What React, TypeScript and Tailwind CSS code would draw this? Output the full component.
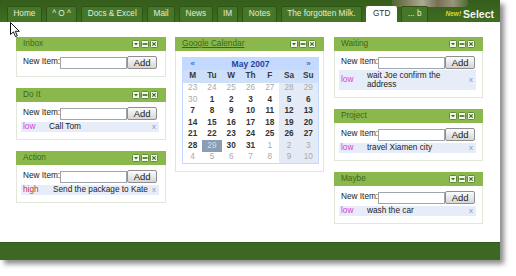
import React from "react";

function HeadIcons() {
  return (
    <div className="flex gap-[1px]">
      <svg width="8" height="8" viewBox="0 0 8 8">
        <rect x="0.5" y="0.5" width="7" height="7" rx="1" fill="#f4f7ef" stroke="#5f8a36" />
        <path d="M2 3h4L4 5.6z" fill="#3b6a1a" />
      </svg>
      <svg width="8" height="8" viewBox="0 0 8 8">
        <rect x="0.5" y="0.5" width="7" height="7" rx="1" fill="#f4f7ef" stroke="#5f8a36" />
        <rect x="1.6" y="3.2" width="4.8" height="1.6" fill="#3b6a1a" />
      </svg>
      <svg width="8" height="8" viewBox="0 0 8 8">
        <rect x="0.5" y="0.5" width="7" height="7" rx="1" fill="#f4f7ef" stroke="#5f8a36" />
        <path d="M2.3 2.3l3.4 3.4M5.7 2.3L2.3 5.7" stroke="#3b6a1a" strokeWidth="1.1" />
      </svg>
    </div>
  );
}

function Panel({
  title,
  link,
  children,
  body,
}: {
  title: string;
  link?: boolean;
  children: React.ReactNode;
  body?: string;
}) {
  return (
    <div>
      <div className="h-[14px] bg-[#8bb84d] flex items-center justify-between pl-[7px] pr-[8px]">
        <span
          className={
            link
              ? "text-[8.25px] leading-none text-[#3a6817] underline"
              : "text-[8.25px] leading-none text-[#3a6817]"
          }
        >
          {title}
        </span>
        <HeadIcons />
      </div>
      <div
        className={
          body ??
          "border-x border-b border-[#e2e7dc] bg-white pl-[4px] pr-[6px] pt-[5px] pb-[7px]"
        }
      >
        {children}
      </div>
    </div>
  );
}

function NewItemRow() {
  return (
    <div className="flex items-center h-[13px] pl-[2px]">
      <span className="text-[8.25px] leading-none text-[#222] whitespace-nowrap">New Item:</span>
      <input
        type="text"
        className="w-[67px] h-[12px] border border-[#9da6ae] bg-white outline-none"
      />
      <button className="w-[30px] h-[13px] border border-[#8f8f8f] rounded-[2px] bg-[linear-gradient(#fbfbfb,#d6d6d6)] text-[9.5px] leading-none text-[#222] flex items-center justify-center">
        Add
      </button>
    </div>
  );
}

function Item({ prio, text, tight }: { prio: "low" | "high"; text: string; tight?: boolean }) {
  return (
    <div
      className={
        tight
          ? "mt-[1px] flex items-center bg-[#e7edf8] pl-[2px] pr-[3px] py-[0.5px]"
          : "mt-[2px] flex items-center bg-[#e7edf8] pl-[2px] pr-[3px] h-[10px]"
      }
    >
      <span
        className={
          prio === "high"
            ? "w-[30px] shrink-0 text-[8.25px] leading-[9.5px] text-[#d03030]"
            : "w-[26px] shrink-0 text-[8.25px] leading-[9.5px] text-[#d33ed3]"
        }
      >
        {prio}
      </span>
      <span className="flex-1 text-[8.25px] leading-[9.5px] text-[#222] pr-[3px]">{text}</span>
      <span className="text-[8px] leading-none text-[#8797ba]">x</span>
    </div>
  );
}

const weeks: number[][] = [
  [23, 24, 25, 26, 27, 28, 29],
  [30, 1, 2, 3, 4, 5, 6],
  [7, 8, 9, 10, 11, 12, 13],
  [14, 15, 16, 17, 18, 19, 20],
  [21, 22, 23, 24, 25, 26, 27],
  [28, 29, 30, 31, 1, 2, 3],
  [4, 5, 6, 7, 8, 9, 10],
];

function isOther(w: number, d: number) {
  if (w === 0 || w === 6) return true;
  if (w === 1 && d === 0) return true;
  if (w === 5 && d >= 4) return true;
  return false;
}

function Calendar() {
  const names = ["M", "Tu", "W", "Th", "F", "Sa", "Su"];
  return (
    <div className="w-[137px] border border-[#c3d9ff] bg-[#c3d9ff]">
      <div className="grid grid-cols-7 h-[12px] items-center text-[#23449c]">
        <span className="text-center text-[8px] leading-none">«</span>
        <span className="col-span-5 text-center text-[8.5px] font-bold leading-none">May 2007</span>
        <span className="text-center text-[8px] leading-none">»</span>
      </div>
      <div className="grid grid-cols-7 h-[12.5px] items-center bg-[#cddff9]">
        {names.map((n) => (
          <span key={n} className="text-center text-[8.25px] font-bold leading-none text-[#3a3a3a]">
            {n}
          </span>
        ))}
      </div>
      <div className="grid grid-cols-7 bg-white">
        {weeks.map((wk, wi) =>
          wk.map((d, di) => {
            const other = isOther(wi, di);
            const sel = wi === 5 && di === 1;
            const weekend = di >= 5;
            let cls = "h-[11.5px] flex items-center justify-center text-[8.25px] leading-none ";
            if (sel) cls += "bg-[#8b9db4] text-[#d3dde9] ";
            else if (weekend) cls += "bg-[#e4ebf6] ";
            if (!sel) cls += other ? "text-[#aaaaaa]" : "font-bold text-[#333333]";
            return (
              <span key={wi + "-" + di} className={cls}>
                {d}
              </span>
            );
          })
        )}
      </div>
    </div>
  );
}

const tabs = ["Home", "^ O ^", "Docs & Excel", "Mail", "News", "IM", "Notes", "The forgotten Milk.", "GTD", "... b"];

export default function App() {
  return (
    <div className="w-[516px] h-[276px] bg-white [font-family:'Liberation_Sans',Arial,sans-serif]">
      <div className="relative w-[500px] h-[260px] flex flex-col bg-white shadow-[4px_4px_5px_rgba(0,0,0,0.45)]">
        {/* top bar */}
        <div className="relative h-[22px] bg-[linear-gradient(#355d1b,#3f6c22)] flex items-end pl-[7px] gap-[4px]">
          <div className="absolute left-[392px] top-0 w-[76px] h-[7px] rounded-b-[4px] bg-[linear-gradient(90deg,#4d6a33,#8d846a_20%,#b8b3a2_40%,#7d7058_60%,#a59c84_80%,#4f6c31)] opacity-90" />
          {tabs.map((t) =>
            t === "GTD" ? (
              <div
                key={t}
                className="relative h-[16px] px-[7px] bg-white rounded-t-[2px] flex items-center text-[8.25px] leading-none text-[#333]"
              >
                {t}
              </div>
            ) : (
              <div
                key={t}
                className="relative h-[16px] px-[5.4px] bg-[#467729] border border-b-0 border-[#2d5317] rounded-t-[2px] flex items-center text-[8.25px] leading-none text-[#e4ecda] whitespace-nowrap"
              >
                {t}
              </div>
            )
          )}
          <div className="relative ml-auto mr-[6px] h-[16px] flex items-center gap-[2px]">
            <span className="text-[6.5px] italic font-bold leading-none text-[#e8d41c]">New!</span>
            <span className="text-[10.5px] font-bold leading-none text-[#f2f6ec]">Select</span>
          </div>
        </div>

        {/* content */}
        <div className="flex-1 flex pl-[16px] pt-[15px]">
          <div className="w-[150px] flex flex-col gap-[11px]">
            <Panel title="Inbox">
              <NewItemRow />
            </Panel>
            <Panel title="Do It">
              <NewItemRow />
              <Item prio="low" text="Call Tom" />
            </Panel>
            <Panel title="Action">
              <NewItemRow />
              <Item prio="high" text="Send the package to Kate" />
            </Panel>
          </div>
          <div className="w-[149px] ml-[9px]">
            <Panel
              title="Google Calendar"
              link
              body="border-x border-b border-[#e2e7dc] bg-white pl-[6px] pt-[6px] pb-[7px]"
            >
              <Calendar />
            </Panel>
          </div>
          <div className="w-[149px] ml-[10px] flex flex-col gap-[11px]">
            <Panel title="Waiting">
              <NewItemRow />
              <Item prio="low" text="wait Joe confirm the address" tight />
            </Panel>
            <Panel title="Project">
              <NewItemRow />
              <Item prio="low" text="travel Xiamen city" />
            </Panel>
            <Panel title="Maybe">
              <NewItemRow />
              <Item prio="low" text="wash the car" />
            </Panel>
          </div>
        </div>

        {/* footer */}
        <div className="h-[18px] bg-[#3d6821] border-t border-[#335a1b]" />

        {/* cursor */}
        <svg className="absolute left-[10px] top-[22px]" width="11" height="16" viewBox="0 0 11 16">
          <path
            d="M0.5 0.5 L0.5 12.5 L3.4 9.9 L5.5 14.6 L7.3 13.8 L5.3 9.3 L9.3 9.3 Z"
            fill="white"
            stroke="#111"
            strokeWidth="1"
            strokeLinejoin="round"
          />
        </svg>
      </div>
    </div>
  );
}
